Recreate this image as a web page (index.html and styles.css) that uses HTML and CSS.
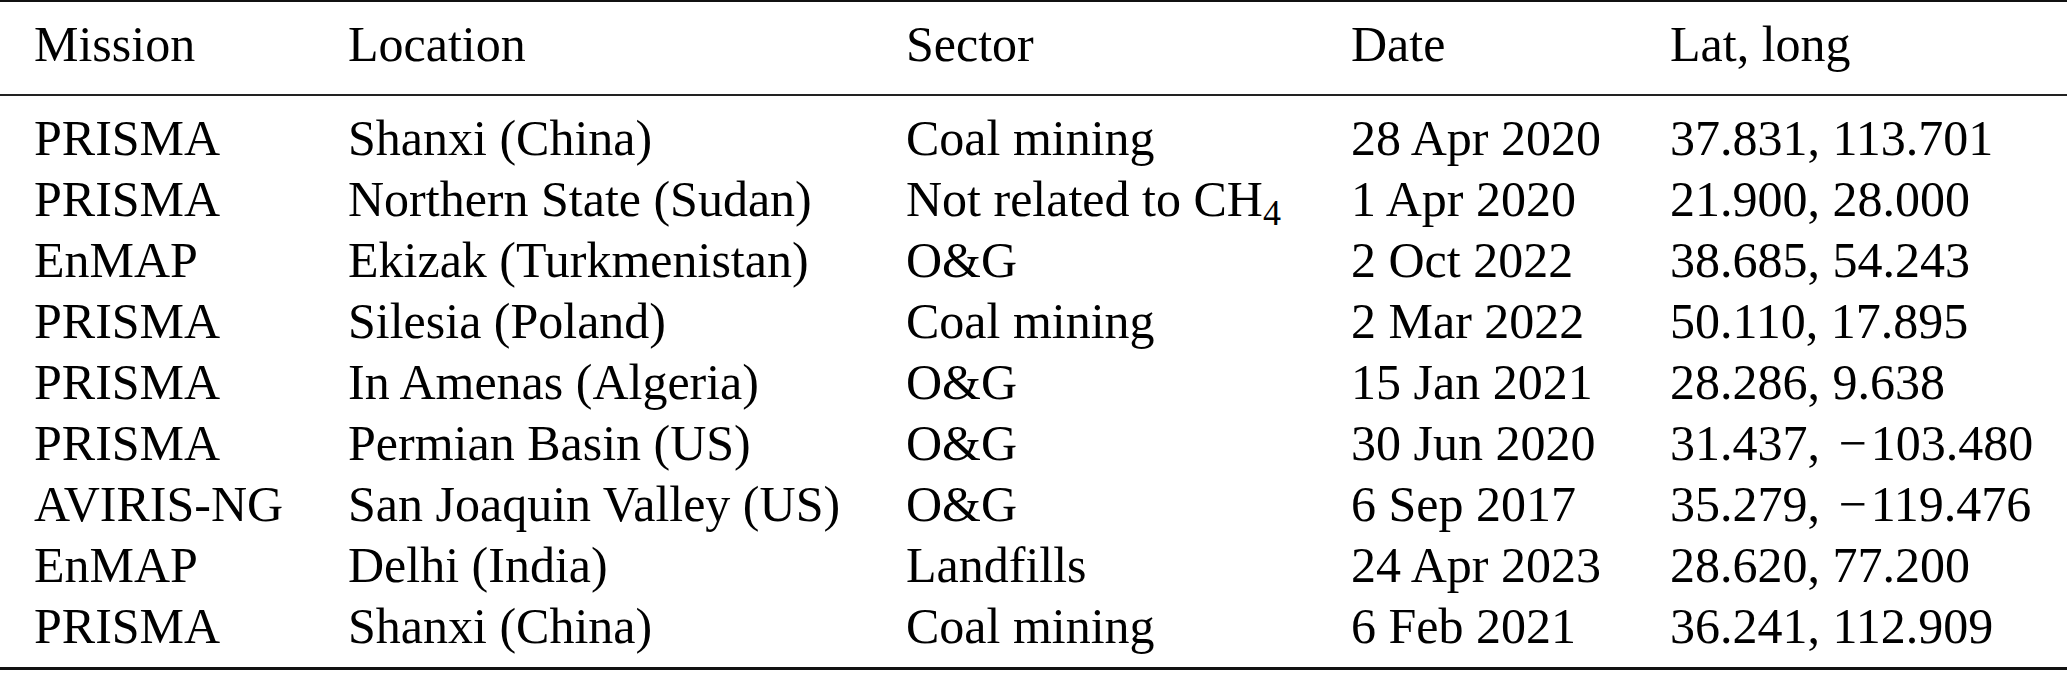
FILE: index.html
```html
<!DOCTYPE html>
<html>
<head>
<meta charset="utf-8">
<link rel="stylesheet" href="styles.css">
</head>
<body>
<div class="tbl">
  <div class="rule rule-top"></div>
  <div class="row head">
    <div>Mission</div><div>Location</div><div>Sector</div><div>Date</div><div>Lat, long</div>
  </div>
  <div class="rule rule-mid"></div>
  <div class="body">
    <div class="row"><div>PRISMA</div><div>Shanxi (China)</div><div>Coal mining</div><div>28 Apr 2020</div><div>37.831, 113.701</div></div>
    <div class="row"><div>PRISMA</div><div>Northern State (Sudan)</div><div>Not related to CH<span class="sub">4</span></div><div>1 Apr 2020</div><div>21.900, 28.000</div></div>
    <div class="row"><div>EnMAP</div><div>Ekizak (Turkmenistan)</div><div>O&amp;G</div><div>2 Oct 2022</div><div>38.685, 54.243</div></div>
    <div class="row"><div>PRISMA</div><div>Silesia (Poland)</div><div>Coal mining</div><div>2 Mar 2022</div><div>50.110, 17.895</div></div>
    <div class="row"><div>PRISMA</div><div>In Amenas (Algeria)</div><div>O&amp;G</div><div>15 Jan 2021</div><div>28.286, 9.638</div></div>
    <div class="row"><div>PRISMA</div><div>Permian Basin (US)</div><div>O&amp;G</div><div>30 Jun 2020</div><div>31.437, <span class="minus">−</span>103.480</div></div>
    <div class="row"><div>AVIRIS-NG</div><div>San Joaquin Valley (US)</div><div>O&amp;G</div><div>6 Sep 2017</div><div>35.279, <span class="minus">−</span>119.476</div></div>
    <div class="row"><div>EnMAP</div><div>Delhi (India)</div><div>Landfills</div><div>24 Apr 2023</div><div>28.620, 77.200</div></div>
    <div class="row"><div>PRISMA</div><div>Shanxi (China)</div><div>Coal mining</div><div>6 Feb 2021</div><div>36.241, 112.909</div></div>
  </div>
  <div class="rule rule-bottom"></div>
</div>
</body>
</html>
```
FILE: styles.css
```css
html, body {
  margin: 0;
  padding: 0;
  background: #ffffff;
}
body {
  font-family: "Liberation Serif", "Times New Roman", serif;
  font-size: 50px;
  color: #000000;
}
.tbl {
  width: 2067px;
}
.rule {
  background: #111111;
}
.rule-top {
  height: 2px;
}
.rule-mid {
  height: 2px;
  margin-top: 19px;
  background: #222222;
}
.rule-bottom {
  height: 3px;
  margin-top: 10px;
}
.head {
  padding-top: 12px;
}
.body {
  padding-top: 12px;
}
.row {
  display: grid;
  grid-template-columns: 314px 558px 445px 319px 1fr;
  padding-left: 34px;
  line-height: 61px;
  height: 61px;
  white-space: nowrap;
}
.head {
  height: 61px;
}
.sub {
  font-size: 36px;
  vertical-align: -9px;
  line-height: 0;
}
.minus {
  padding: 0 4px 0 6px;
}
```
